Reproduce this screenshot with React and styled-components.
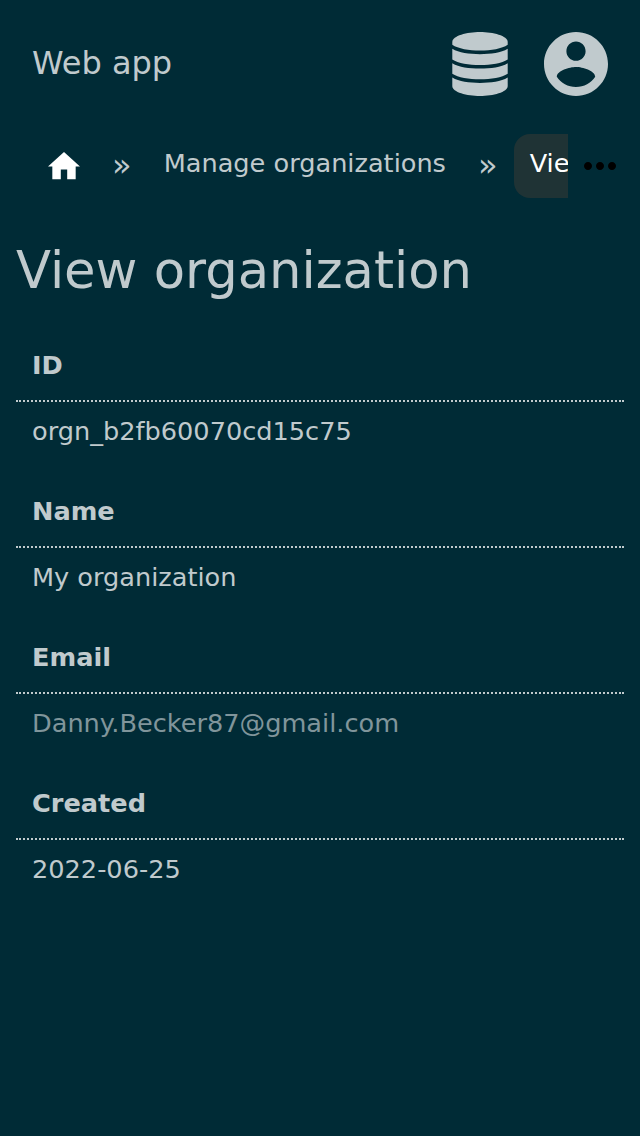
import React from 'react';
import styled, { createGlobalStyle } from 'styled-components';
import { MdMoreHoriz } from 'react-icons/md';

const GlobalStyle = createGlobalStyle`
  * { box-sizing: border-box; }
  html { background: #002b36; }
  body {
    margin: 0;
    color: #c0cacd;
    font-family: "DejaVu Sans", sans-serif;
    font-size: 25.6px;
    line-height: 32px;
  }
`;

const Page = styled.div`
  min-height: 100vh;
  background: #002b36;
`;

const Header = styled.header`
  display: flex;
  align-items: center;
  height: 128px;
  padding: 0 32px;
  gap: 32px;
`;

const Brand = styled.div`
  flex: 1;
  padding-bottom: 2px;
  font-size: 32px;
  line-height: 40px;
`;

const HeaderIcon = styled.svg`
  flex: none;
  width: 64px;
  height: 64px;
  fill: currentColor;
`;

const Nav = styled.nav`
  display: flex;
  height: 76px;
  padding: 6px 8px 0 32px;
`;

const Trail = styled.div`
  display: flex;
  flex: 1;
  min-width: 0;
  overflow: hidden;
  white-space: nowrap;
`;

const Crumb = styled.a`
  flex: none;
  height: 64px;
  padding: 13px 16px 0;
  border-radius: 16px;
  color: ${(p) => (p.$active ? '#fff' : 'inherit')};
  background: ${(p) => (p.$active ? '#1f3335' : 'transparent')};
`;

const HomeCrumb = styled.a`
  flex: none;
  width: 64px;
  height: 64px;
  padding: 18.4px 16px 0;
  color: #fff;
`;

const HomeIcon = styled.svg`
  display: block;
  width: 32px;
  height: 27.2px;
  fill: currentColor;
`;

const Separator = styled.span`
  flex: none;
  width: 19.7px;
  margin: 0 16px;
  padding-top: 15px;
  font-size: 32px;
`;

const More = styled.div`
  display: flex;
  flex: none;
  align-items: center;
  justify-content: center;
  width: 64px;
  height: 64px;
  color: #000;
`;

const Title = styled.h1`
  margin: 0;
  padding: 34px 16px 0;
  height: 128px;
  font-size: 51.2px;
  font-weight: 400;
  line-height: 64px;
`;

const Details = styled.dl`
  margin: 0;
  padding: 0 16px;
`;

const Field = styled.div`
  height: 146px;
`;

const Label = styled.dt`
  height: 70px;
  padding: 17px 16px 0;
  border-bottom: 2px dotted #c0cacd;
  font-weight: 700;
`;

const Value = styled.dd`
  margin: 0;
  padding: 13px 16px 0;
  color: ${(p) => (p.$muted ? '#80959b' : 'inherit')};
`;

const fields = [
  { label: 'ID', value: 'orgn_b2fb60070cd15c75' },
  { label: 'Name', value: 'My organization' },
  { label: 'Email', value: 'Danny.Becker87@gmail.com', muted: true },
  { label: 'Created', value: '2022-06-25' },
];

export default function App() {
  return (
    <Page>
      <GlobalStyle />
      <Header>
        <Brand>Web app</Brand>
        <HeaderIcon viewBox="0 0 64 64">
          <path d="M32 0C45 0 59.700 3.800 59.700 10V12.800C54 16.800 43 18.600 32 18.600S10 16.800 4.300 12.800V10C4.300 3.800 19 0 32 0z" />
          <path d="M4.300 16.800C11 20.800 21 22.200 32 22.200S53 20.800 59.700 16.800V27.400C54 31.200 43 32.900 32 32.900S10 31.200 4.300 27.400z" />
          <path d="M4.300 31.200C11 35.200 21 36.600 32 36.600S53 35.200 59.700 31.200V41.700C54 45.500 43 47.200 32 47.200S10 45.500 4.300 41.700z" />
          <path d="M4.300 45.500C11 49.500 21 50.900 32 50.900S53 49.500 59.700 45.500V54C59.700 60.200 45 64 32 64S4.300 60.200 4.300 54z" />
        </HeaderIcon>
        <HeaderIcon viewBox="2 2 20 20">
          <path d="M12 2C6.48 2 2 6.48 2 12s4.480 10 10 10 10-4.480 10-10S17.520 2 12 2zm0 3c1.660 0 3 1.340 3 3s-1.340 3-3 3-3-1.340-3-3 1.340-3 3-3zm0 14.200c-2.500 0-4.710-1.280-6-3.220.030-1.990 4-3.080 6-3.080 1.990 0 5.970 1.090 6 3.080-1.290 1.940-3.500 3.220-6 3.220z" />
        </HeaderIcon>
      </Header>
      <Nav>
        <Trail>
          <HomeCrumb>
            <HomeIcon viewBox="2 3 20 17">
              <path d="M10 20v-6h4v6h5.300v-8H22L12 3 2 12h2.700v8z" />
            </HomeIcon>
          </HomeCrumb>
          <Separator>»</Separator>
          <Crumb>Manage organizations</Crumb>
          <Separator>»</Separator>
          <Crumb $active>View organization</Crumb>
        </Trail>
        <More><MdMoreHoriz size={48} /></More>
      </Nav>
      <Title>View organization</Title>
      <Details>
        {fields.map((field) => (
          <Field key={field.label}>
            <Label>{field.label}</Label>
            <Value $muted={field.muted}>{field.value}</Value>
          </Field>
        ))}
      </Details>
    </Page>
  );
}
